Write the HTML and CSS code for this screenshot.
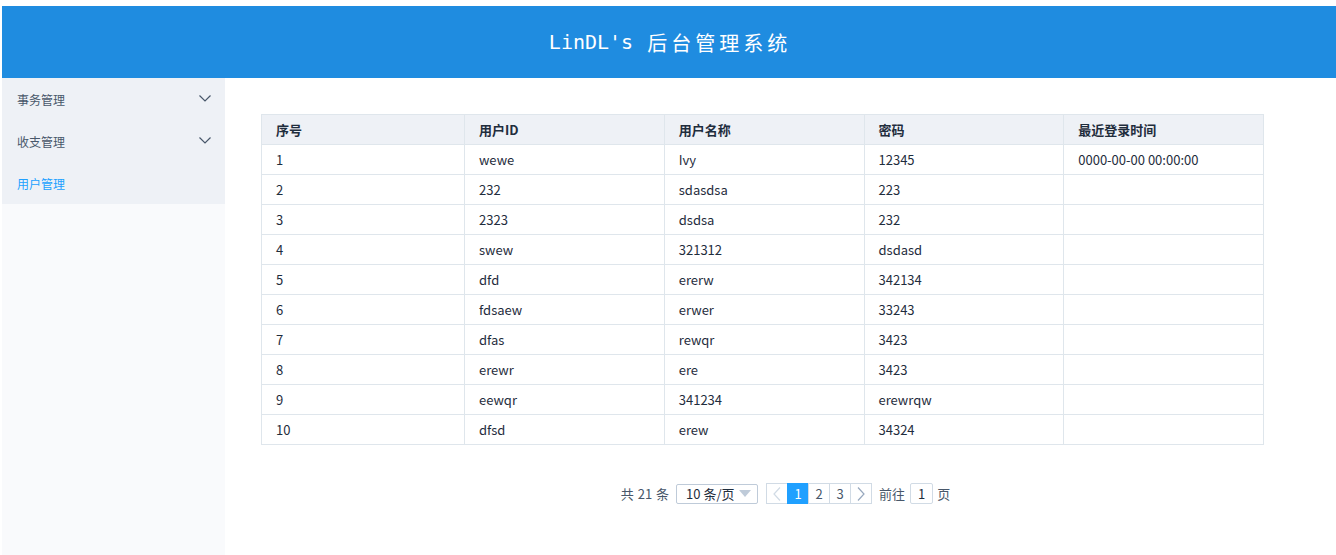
FILE: index.html
```html
<!DOCTYPE html>
<html lang="zh">
<head>
<meta charset="utf-8">
<title>LinDL's 后台管理系统</title>
<link rel="stylesheet" href="styles.css">
</head>
<body>
<div class="app">
  <header class="header"><span class="title-latin">LinDL's</span><span class="title-cjk">后台管理系统</span></header>
  <div class="main">
    <aside class="sidebar">
      <ul class="menu">
        <li class="menu-item">事务管理<svg class="arrow" viewBox="0 0 12 7" width="12" height="7"><path d="M0.5 0.5 L6 6 L11.5 0.5" fill="none" stroke="#48576a" stroke-width="1.2"/></svg></li>
        <li class="menu-item">收支管理<svg class="arrow" viewBox="0 0 12 7" width="12" height="7"><path d="M0.5 0.5 L6 6 L11.5 0.5" fill="none" stroke="#48576a" stroke-width="1.2"/></svg></li>
        <li class="menu-item active">用户管理</li>
      </ul>
    </aside>
    <section class="content">
      <table class="table">
        <thead>
          <tr><th>序号</th><th>用户ID</th><th>用户名称</th><th>密码</th><th>最近登录时间</th></tr>
        </thead>
        <tbody>
          <tr><td>1</td><td>wewe</td><td>Ivy</td><td>12345</td><td>0000-00-00 00:00:00</td></tr>
          <tr><td>2</td><td>232</td><td>sdasdsa</td><td>223</td><td></td></tr>
          <tr><td>3</td><td>2323</td><td>dsdsa</td><td>232</td><td></td></tr>
          <tr><td>4</td><td>swew</td><td>321312</td><td>dsdasd</td><td></td></tr>
          <tr><td>5</td><td>dfd</td><td>ererw</td><td>342134</td><td></td></tr>
          <tr><td>6</td><td>fdsaew</td><td>erwer</td><td>33243</td><td></td></tr>
          <tr><td>7</td><td>dfas</td><td>rewqr</td><td>3423</td><td></td></tr>
          <tr><td>8</td><td>erewr</td><td>ere</td><td>3423</td><td></td></tr>
          <tr><td>9</td><td>eewqr</td><td>341234</td><td>erewrqw</td><td></td></tr>
          <tr><td>10</td><td>dfsd</td><td>erew</td><td>34324</td><td></td></tr>
        </tbody>
      </table>
      <div class="pagination">
        <span class="total">共 21 条</span>
        <span class="sizes">10 条/页<svg class="caret" viewBox="0 0 12 7" width="12" height="7"><path d="M0 0 L12 0 L6 7 Z" fill="#bfcbd9"/></svg></span>
        <span class="pager">
          <span class="pbtn disabled"><svg viewBox="0 0 8 14" width="8" height="14"><path d="M7 0.5 L1 7 L7 13.5" fill="none" stroke="#d1dbe5" stroke-width="1.2"/></svg></span>
          <span class="pbtn current">1</span>
          <span class="pbtn">2</span>
          <span class="pbtn">3</span>
          <span class="pbtn"><svg viewBox="0 0 8 14" width="8" height="14"><path d="M1 0.5 L7 7 L1 13.5" fill="none" stroke="#97a8be" stroke-width="1.2"/></svg></span>
        </span>
        <span class="jump">前往<span class="jump-input">1</span>页</span>
      </div>
    </section>
  </div>
</div>
</body>
</html>
```
FILE: styles.css
```css
* { box-sizing: border-box; }
html, body { margin: 0; padding: 0; background: #fff; }
body {
  padding: 6px 0 0 2px;
  font-family: "Noto Sans CJK SC", "Liberation Sans", sans-serif;
  color: #1f2d3d;
}
.app { display: flex; flex-direction: column; height: 549px; }
.header {
  height: 72px;
  background: #1f8ce0;
  color: #fff;
  display: flex;
  align-items: center;
  justify-content: center;
  font-family: "DejaVu Sans Mono", "Noto Sans CJK SC", monospace;
  font-size: 20px;
  padding-left: 2px;
}
.title-latin { letter-spacing: 0; margin-right: 14px; }
.title-cjk { letter-spacing: 4px; font-size: 20px; }
.main { display: flex; flex: 1; }
.sidebar { width: 223px; background: #f9fafc; }
.menu { list-style: none; margin: 0; padding: 0; background: #eef1f6; }
.menu-item {
  height: 42px;
  display: flex;
  align-items: center;
  justify-content: space-between;
  padding: 0 14px 0 15px;
  font-size: 12px;
  color: #48576a;
}
.menu-item.active { color: #20a0ff; }
.arrow { display: block; margin-top: -2px; }
.content { flex: 1; padding: 36px 0 0 36px; }
.table {
  width: 1003px;
  border-collapse: collapse;
  font-size: 13px;
  table-layout: fixed;
}
.table th, .table td {
  border: 1px solid #dfe6ec;
  text-align: left;
  padding: 0 14px;
  font-weight: normal;
  white-space: nowrap;
}
.table th {
  background: #eef1f6;
  height: 30px;
  font-weight: bold;
  color: #1f2d3d;
}
.table td { height: 30px; color: #1f2d3d; }
.table th:nth-child(1), .table td:nth-child(1) { width: 203px; }
.pagination {
  display: flex;
  align-items: center;
  width: 1003px;
  justify-content: center;
  margin-top: 38px;
  font-size: 13px;
  color: #48576a;
  padding-left: 46px;
}
.total { margin-right: 7px; word-spacing: 1px; }
.sizes {
  width: 82px;
  height: 20px;
  border: 1px solid #bfcbd9;
  border-radius: 2px;
  display: flex;
  align-items: center;
  justify-content: space-between;
  padding: 0 6px 0 9px;
  color: #1f2d3d;
  margin-right: 8px;
}
.caret { display: block; }
.pager { display: flex; }
.pbtn {
  width: 22px;
  height: 21px;
  border: 1px solid #d1dbe5;
  margin-left: -1px;
  display: flex;
  align-items: center;
  justify-content: center;
  color: #48576a;
  background: #fff;
}
.pbtn:first-child { margin-left: 0; }
.pbtn.current { background: #20a0ff; border-color: #20a0ff; color: #fff; }
.jump { display: flex; align-items: center; margin-left: 7px; }
.jump-input {
  width: 23px;
  height: 21px;
  border: 1px solid #d1dbe5;
  border-radius: 2px;
  display: flex;
  align-items: center;
  justify-content: center;
  margin: 0 4px 0 5px;
  color: #1f2d3d;
}
```
